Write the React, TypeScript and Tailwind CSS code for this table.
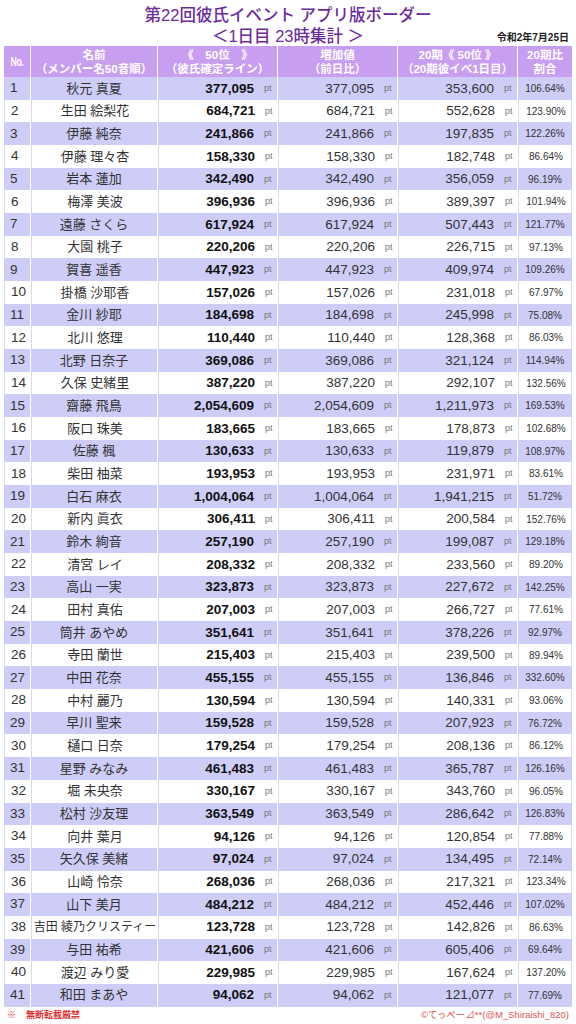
import React from "react";

type Row = [number, string, string, string, string, string];

const rows: Row[] = [
  [1, "秋元 真夏", "377,095", "377,095", "353,600", "106.64%"],
  [2, "生田 絵梨花", "684,721", "684,721", "552,628", "123.90%"],
  [3, "伊藤 純奈", "241,866", "241,866", "197,835", "122.26%"],
  [4, "伊藤 理々杏", "158,330", "158,330", "182,748", "86.64%"],
  [5, "岩本 蓮加", "342,490", "342,490", "356,059", "96.19%"],
  [6, "梅澤 美波", "396,936", "396,936", "389,397", "101.94%"],
  [7, "遠藤 さくら", "617,924", "617,924", "507,443", "121.77%"],
  [8, "大園 桃子", "220,206", "220,206", "226,715", "97.13%"],
  [9, "賀喜 遥香", "447,923", "447,923", "409,974", "109.26%"],
  [10, "掛橋 沙耶香", "157,026", "157,026", "231,018", "67.97%"],
  [11, "金川 紗耶", "184,698", "184,698", "245,998", "75.08%"],
  [12, "北川 悠理", "110,440", "110,440", "128,368", "86.03%"],
  [13, "北野 日奈子", "369,086", "369,086", "321,124", "114.94%"],
  [14, "久保 史緒里", "387,220", "387,220", "292,107", "132.56%"],
  [15, "齋藤 飛鳥", "2,054,609", "2,054,609", "1,211,973", "169.53%"],
  [16, "阪口 珠美", "183,665", "183,665", "178,873", "102.68%"],
  [17, "佐藤 楓", "130,633", "130,633", "119,879", "108.97%"],
  [18, "柴田 柚菜", "193,953", "193,953", "231,971", "83.61%"],
  [19, "白石 麻衣", "1,004,064", "1,004,064", "1,941,215", "51.72%"],
  [20, "新内 眞衣", "306,411", "306,411", "200,584", "152.76%"],
  [21, "鈴木 絢音", "257,190", "257,190", "199,087", "129.18%"],
  [22, "清宮 レイ", "208,332", "208,332", "233,560", "89.20%"],
  [23, "高山 一実", "323,873", "323,873", "227,672", "142.25%"],
  [24, "田村 真佑", "207,003", "207,003", "266,727", "77.61%"],
  [25, "筒井 あやめ", "351,641", "351,641", "378,226", "92.97%"],
  [26, "寺田 蘭世", "215,403", "215,403", "239,500", "89.94%"],
  [27, "中田 花奈", "455,155", "455,155", "136,846", "332.60%"],
  [28, "中村 麗乃", "130,594", "130,594", "140,331", "93.06%"],
  [29, "早川 聖来", "159,528", "159,528", "207,923", "76.72%"],
  [30, "樋口 日奈", "179,254", "179,254", "208,136", "86.12%"],
  [31, "星野 みなみ", "461,483", "461,483", "365,787", "126.16%"],
  [32, "堀 未央奈", "330,167", "330,167", "343,760", "96.05%"],
  [33, "松村 沙友理", "363,549", "363,549", "286,642", "126.83%"],
  [34, "向井 葉月", "94,126", "94,126", "120,854", "77.88%"],
  [35, "矢久保 美緒", "97,024", "97,024", "134,495", "72.14%"],
  [36, "山崎 怜奈", "268,036", "268,036", "217,321", "123.34%"],
  [37, "山下 美月", "484,212", "484,212", "452,446", "107.02%"],
  [38, "吉田 綾乃クリスティー", "123,728", "123,728", "142,826", "86.63%"],
  [39, "与田 祐希", "421,606", "421,606", "605,406", "69.64%"],
  [40, "渡辺 みり愛", "229,985", "229,985", "167,624", "137.20%"],
  [41, "和田 まあや", "94,062", "94,062", "121,077", "77.69%"],
];

const grid = "grid grid-cols-[27px_127px_120px_120px_120px_54px]";

function Val({ v, bold, border }: { v: string; bold?: boolean; border: string }) {
  return (
    <div className={`flex items-center justify-end pr-[4px] border-r ${border}`}>
      <span
        className={`text-[13.5px] leading-none ${bold ? "font-bold text-[#111]" : "text-[#333]"}`}
      >
        {v}
      </span>
      <span className="ml-[10px] w-[9px] text-[9px] leading-none text-[#777]">pt</span>
    </div>
  );
}

export default function App() {
  return (
    <div
      className="w-[576px] h-[1024px] bg-white overflow-hidden"
      style={{ fontFamily: '"Liberation Sans", "Noto Sans CJK JP", sans-serif' }}
    >
      <div className="h-[46px] relative">
        <div className="pt-[5px] text-center text-[16.5px] leading-[21px] font-medium text-[#6c2c9e]">
          第22回彼氏イベント アプリ版ボーダー
        </div>
        <div className="text-center text-[16.5px] leading-[20px] font-medium text-[#6c2c9e]">
          ＜1日目 23時集計 ＞
        </div>
        <div className="absolute right-[7px] top-[33px] text-[10px] font-bold text-[#222] leading-none">
          令和2年7月25日
        </div>
      </div>

      <div className="mx-[4px]">
        <div className={`${grid} h-[31px] bg-[#c89ef1] text-white font-bold text-[11.5px] leading-[14px]`}>
          <div className="flex items-center justify-center border-r border-white">
            <span className="inline-block text-[12px] tracking-[-0.5px] scale-x-[0.72]">No.</span>
          </div>
          <div className="flex flex-col items-center justify-center border-r border-white">
            <span>名前</span>
            <span>（メンバー名50音順）</span>
          </div>
          <div className="flex flex-col items-center justify-center border-r border-white">
            <span>《　50位　》</span>
            <span>（彼氏確定ライン）</span>
          </div>
          <div className="flex flex-col items-center justify-center border-r border-white">
            <span>増加値</span>
            <span>（前日比）</span>
          </div>
          <div className="flex flex-col items-center justify-center border-r border-white">
            <span>20期《 50位 》</span>
            <span>（20期彼イベ1日目）</span>
          </div>
          <div className="flex flex-col items-center justify-center">
            <span>20期比</span>
            <span>割合</span>
          </div>
        </div>

        {rows.map((r) => {
          const odd = r[0] % 2 === 1;
          const border = odd ? "border-white" : "border-[#dcdce6]";
          return (
            <div
              key={r[0]}
              className={`${grid} h-[22.68px] ${odd ? "bg-[#cdcdf8]" : "bg-white border-x border-[#dcdce6]"}`}
            >
              <div className={`flex items-center pl-[6px] text-[13.5px] text-[#333] border-r ${border}`}>
                {r[0]}
              </div>
              <div
                className={`flex items-center justify-center whitespace-nowrap text-[#333] border-r ${border} ${
                  r[1].length > 8 ? "text-[12px]" : "text-[13px]"
                }`}
              >
                {r[1]}
              </div>
              <Val v={r[2]} bold border={border} />
              <Val v={r[3]} border={border} />
              <Val v={r[4]} border={border} />
              <div className="flex items-center justify-center text-[10px] text-[#333]">{r[5]}</div>
            </div>
          );
        })}
      </div>

      <div className="flex items-center justify-between px-[7px] h-[17px] text-[9px] leading-none">
        <div className="flex items-center text-[#e03030] font-bold">
          <span className="mr-[10px]">※</span>
          <span>無断転載厳禁</span>
        </div>
        <div className="text-[#e05555] text-[9.5px]">©てっぺー⊿**(@M_Shiraishi_820)</div>
      </div>
    </div>
  );
}
